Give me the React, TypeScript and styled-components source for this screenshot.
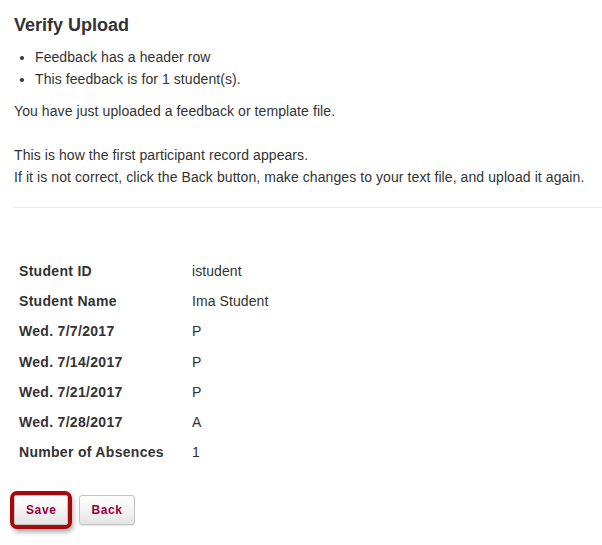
import { ReactElement } from "react";
import styled, { createGlobalStyle } from "styled-components";

const GlobalStyle = createGlobalStyle`
  html, body {
    margin: 0;
    padding: 0;
    background: #fff;
  }

  body {
    font-family: "Liberation Sans", Arial, sans-serif;
    font-size: 14px;
    letter-spacing: 0.08px;
    color: #333;
  }
`;

const records = [
  { label: "Student ID", value: "istudent" },
  { label: "Student Name", value: "Ima Student" },
  { label: "Wed. 7/7/2017", value: "P" },
  { label: "Wed. 7/14/2017", value: "P" },
  { label: "Wed. 7/21/2017", value: "P" },
  { label: "Wed. 7/28/2017", value: "A" },
  { label: "Number of Absences", value: "1" },
];

function App(): ReactElement {
  return (
    <>
      <GlobalStyle />
      <Page>
        <Title>Verify Upload</Title>
        <InfoList>
          <li>Feedback has a header row</li>
          <li>This feedback is for 1 student(s).</li>
        </InfoList>
        <Message>
          You have just uploaded a feedback or template file.
          <br />
          <br />
          This is how the first participant record appears.
          <br />
          If it is not correct, click the Back button, make changes to your
          text file, and upload it again.
        </Message>
        <Divider />
        <RecordTable>
          <tbody>
            {records.map((row) => (
              <tr key={row.label}>
                <LabelCell>{row.label}</LabelCell>
                <ValueCell>{row.value}</ValueCell>
              </tr>
            ))}
          </tbody>
        </RecordTable>
        <ButtonBar>
          <ActionButton $highlighted>Save</ActionButton>
          <ActionButton>Back</ActionButton>
        </ButtonBar>
      </Page>
    </>
  );
}

export default App;

const Page = styled.div`
  padding: 15px 0 20px 14px;
  line-height: 22px;
`;

const Title = styled.h2`
  margin: 0;
  font-size: 18px;
  line-height: 20px;
  font-weight: bold;
  letter-spacing: 0;
  color: #333;
`;

const InfoList = styled.ul`
  margin: 11px 0 10px 0;
  padding-left: 21px;

  li {
    line-height: 22px;
  }
`;

const Message = styled.p`
  margin: 0;
  line-height: 22px;
`;

const Divider = styled.hr`
  margin: 19px 0 0 0;
  border: 0;
  border-top: 1px solid #e6e6e6;
  height: 0;
`;

const RecordTable = styled.table`
  margin-top: 48px;
  border-collapse: collapse;

  td {
    padding: 4px 5px;
    line-height: 22.2px;
    vertical-align: middle;
  }
`;

const LabelCell = styled.td`
  width: 163px;
  font-weight: bold;
  letter-spacing: 0.3px;
`;

const ValueCell = styled.td`
  font-weight: normal;
`;

const ButtonBar = styled.div`
  display: flex;
  gap: 11px;
  margin-top: 28px;
`;

const ActionButton = styled.button<{ $highlighted?: boolean }>`
  height: 30px;
  padding: 0 11px;
  font-family: "Liberation Sans", Arial, sans-serif;
  font-size: 12px;
  font-weight: bold;
  letter-spacing: 0.6px;
  color: #97003e;
  background: linear-gradient(to bottom, #ffffff 0%, #f3f3f3 50%, #e4e4e4 100%);
  border: 1px solid #c4c4c4;
  border-radius: 3px;
  cursor: pointer;
  box-shadow: ${(p) =>
    p.$highlighted
      ? "0 0 0 4px #a50a0a, 2px 4px 5px 3px rgba(0, 0, 0, 0.35)"
      : "0 1px 1px rgba(0, 0, 0, 0.1)"};
`;
